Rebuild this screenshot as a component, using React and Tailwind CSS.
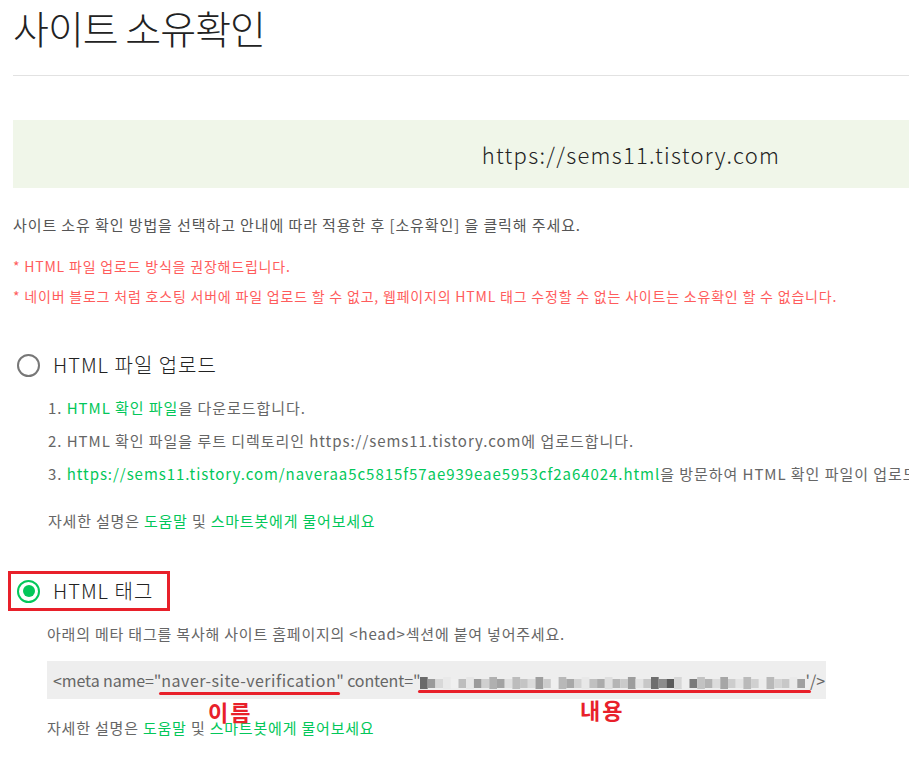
import React from 'react';

const FONT = { fontFamily: '"Noto Sans CJK KR", "Noto Sans", sans-serif' };

// pixelated (blurred-out) verification code blocks
const BLOCKS = [
  '#6a6a6a', '#9a9a9a', '#d8d8d8', '#e9e9e9', '#f0f0f0', '#bdbdbd', '#e6e6e6', '#9a9a9a', '#cfcfcf', '#b0b0b0',
  '#a3a3a3', '#e0e0e0', '#bcbcbc', '#c4c4c4', '#dadada', '#9e9e9e', '#cccccc', '#efefef', '#b8b8b8', '#a8a8a8',
  '#d2d2d2', '#e8e8e8', '#c0c0c0', '#ababab', '#dedede', '#b5b5b5', '#cacaca', '#9d9d9d', '#e3e3e3', '#c7c7c7',
  '#6e6e6e', '#8c8c8c', '#5a5a5a', '#d6d6d6', '#eeeeee', '#7a7a7a', '#c2c2c2', '#b3b3b3', '#dcdcdc', '#a6a6a6',
  '#cdcdcd', '#e4e4e4', '#bababa', '#d0d0d0', '#ececec', '#b9b9b9', '#d4d4d4', '#c8c8c8', '#eaeaea', '#a0a0a0',
];

const Pixelated = () => (
  <svg width="385" height="16" viewBox="0 0 385 16" className="inline-block align-middle">
    {BLOCKS.map((c, i) => (
      <rect key={i} x={i * 7.7} y={i % 3 === 0 ? 2 : 4} width="7.7" height={i % 3 === 0 ? 12 : 9} fill={c} />
    ))}
  </svg>
);

const Radio = ({ checked }) => (
  <span
    className={`flex items-center justify-center w-[23px] h-[23px] rounded-full border-2 bg-white ${
      checked ? 'border-[#03c75a]' : 'border-[#777]'
    }`}
  >
    {checked && <span className="w-[12px] h-[12px] rounded-full bg-[#03c75a]" />}
  </span>
);

const HelpLine = () => (
  <p className="text-[15px] leading-[20px] tracking-[0.8px] text-[#666]">
    자세한 설명은 <span className="text-[#03c75a]">도움말</span> 및{' '}
    <span className="text-[#03c75a]">스마트봇에게 물어보세요</span>
  </p>
);

export default function App() {
  return (
    <div className="w-[909px] h-[757px] overflow-hidden bg-white pl-[13px]" style={FONT}>
      <h1 className="pt-[2px] text-[39px] leading-[50px] font-light text-[#222] tracking-tight">사이트 소유확인</h1>
      <div className="mt-[23px] h-px w-[1000px] bg-[#e2e2e2]" />

      <div className="mt-[44px] h-[68px] w-[1236px] bg-[#f0f6e9] flex items-center justify-center">
        <span className="text-[22px] font-light tracking-[1.3px] text-[#222]">https://sems11.tistory.com</span>
      </div>

      <p className="mt-[27px] text-[15px] leading-[20px] tracking-[0.9px] text-[#555]">
        사이트 소유 확인 방법을 선택하고 안내에 따라 적용한 후 [소유확인] 을 클릭해 주세요.
      </p>
      <p className="mt-[21px] text-[14px] leading-[20px] tracking-[0.8px] text-[#ff5c5c]">
        * HTML 파일 업로드 방식을 권장해드립니다.
      </p>
      <p className="mt-[10px] text-[14px] leading-[20px] tracking-[0.8px] text-[#ff5c5c]">
        * 네이버 블로그 처럼 호스팅 서버에 파일 업로드 할 수 없고, 웹페이지의 HTML 태그 수정할 수 없는 사이트는 소유확인 할 수 없습니다.
      </p>

      <div className="mt-[44px] flex items-center gap-[13px] pl-[4px]">
        <Radio />
        <span className="text-[20px] font-light tracking-[1px] text-[#222]">HTML 파일 업로드</span>
      </div>

      <div className="pl-[35px] mt-[11px] text-[15px] tracking-[0.95px] text-[#666] whitespace-nowrap">
        <p className="leading-[33px]">
          1. <span className="text-[#03c75a]">HTML 확인 파일</span>을 다운로드합니다.
        </p>
        <p className="leading-[33px]">2. HTML 확인 파일을 루트 디렉토리인 https://sems11.tistory.com에 업로드합니다.</p>
        <p className="leading-[33px]">
          3.{' '}
          <span className="text-[#03c75a]">https://sems11.tistory.com/naveraa5c5815f57ae939eae5953cf2a64024.html</span>을
          방문하여 HTML 확인 파일이 업로드 되었는지 확인합니다.
        </p>
        <div className="mt-[21px]">
          <HelpLine />
        </div>
      </div>

      <div className="mt-[40px] -ml-[5px] w-[162px] h-[40px] border-[3px] border-[#e8202a] flex items-center gap-[13px] pl-[6px]">
        <Radio checked />
        <span className="text-[20px] font-light tracking-[1px] text-[#222]">HTML 태그</span>
      </div>

      <div className="pl-[34px]">
        <p className="mt-[13px] text-[15px] leading-[20px] tracking-[0.8px] text-[#666]">
          아래의 메타 태그를 복사해 사이트 홈페이지의 &lt;head&gt;섹션에 붙여 넣어주세요.
        </p>
        <div className="relative mt-[17px] w-[779px] h-[38px] bg-[#eeeeee] flex items-center pl-[6px] text-[16px] text-[#666] whitespace-nowrap">
          <span className="tracking-[-0.1px]">&lt;meta name="</span>
          <span className="relative tracking-[0.5px]">
            naver-site-verification
            <span className="absolute left-[-2px] right-[-4px] top-[24px] h-[3px] rounded-full bg-[#e8202a]" />
          </span>
          <span className="tracking-[-0.1px]">" content="</span>
          <span className="relative">
            <Pixelated />
            <span className="absolute left-[-2px] right-[-6px] top-[22px] h-[3px] rounded-full bg-[#e8202a]" />
          </span>
          <span>'/&gt;</span>
          <span className="absolute left-[161px] top-[37px] text-[22px] font-bold text-[#e8202a] leading-[26px] tracking-[2px]">
            이름
          </span>
          <span className="absolute left-[533px] top-[35px] text-[22px] font-bold text-[#e8202a] leading-[26px] tracking-[2px]">
            내용
          </span>
        </div>
        <div className="mt-[19px]">
          <HelpLine />
        </div>
      </div>
    </div>
  );
}
